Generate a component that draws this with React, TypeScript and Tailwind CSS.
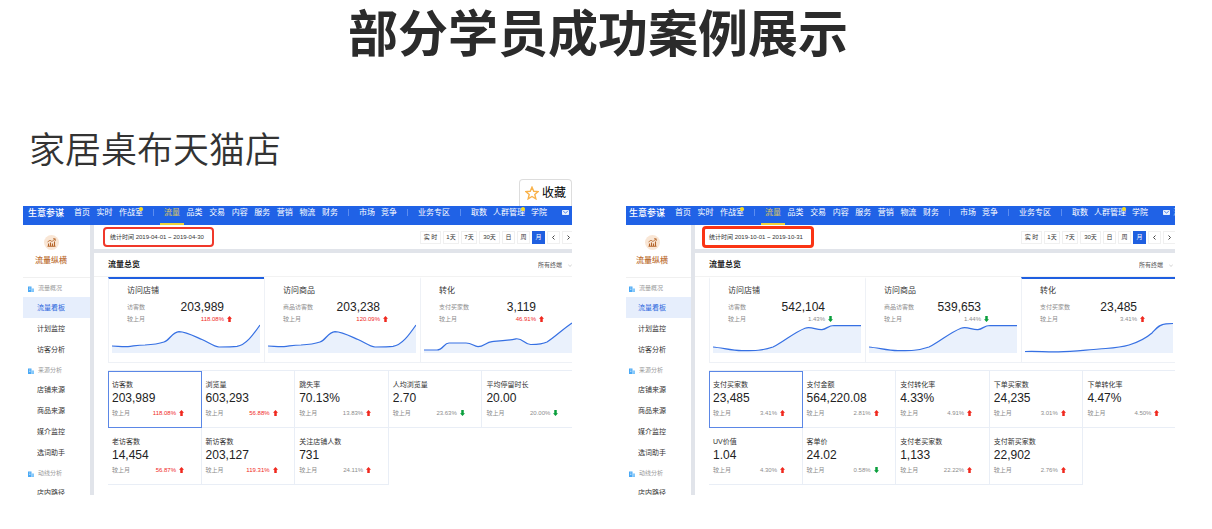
import { useState } from "react";

type Trend = "up" | "down";

interface Metric {
  label: string;
  value: string;
  change: string;
  trend: Trend;
  highlight?: boolean;
}

interface OverviewCard extends Metric {
  title: string;
  line: string;
}

interface Report {
  id: string;
  range: string;
  boldRange: boolean;
  activeCard: number;
  cards: OverviewCard[];
  metrics: Metric[];
}

const VISITOR_LINE = "M0 25C5 25 10 26 16 25.600C22 25 26 24 33 24C40 23.600 46 23 52 21C58 19 60 11 67 10.600C74 10.600 84 16 90 18.500C96 21 102 25.800 107 26C113 26 120 26 125 25.400C134 24 141 14 148 4";
const PAY_LINE = "M0 29L13 29C19 29 20 22 25 22L42 22C48 22 50 25.600 54 25.600C60 25.600 62 21 68 20.600C76 20 84 19.500 92 17.800C99 17 101 24 107 23.500C113 23.500 118 23.500 123 21C131 16 139 8 148 2";
const AUTUMN_LINE = "M0 26C10 27 19 29.700 29 29.700C40 29.700 48 30 60 26C72 20 80 12 92 7.200C98 5 103 9 109 8.600C114 8 115 4.600 121 4.500L148 4.700";
const AUTUMN_PAY_LINE = "M0 30.500C12 30 20 31 32 30.800C46 31 60 29 74 28C86 27 94 27 104 24C114 21 120 18 127 12C131 8 134 3 141 2.800L148 2.500";

const REPORTS: Report[] = [
  {
    id: "april",
    range: "2019-04-01 ~ 2019-04-30",
    boldRange: false,
    activeCard: 0,
    cards: [
      { title: "访问店铺", label: "访客数", value: "203,989", change: "118.08%", trend: "up", highlight: true, line: VISITOR_LINE },
      { title: "访问商品", label: "商品访客数", value: "203,238", change: "120.09%", trend: "up", highlight: true, line: VISITOR_LINE },
      { title: "转化", label: "支付买家数", value: "3,119", change: "46.91%", trend: "up", highlight: true, line: PAY_LINE },
    ],
    metrics: [
      { label: "访客数", value: "203,989", change: "118.08%", trend: "up", highlight: true },
      { label: "浏览量", value: "603,293", change: "56.88%", trend: "up", highlight: true },
      { label: "跳失率", value: "70.13%", change: "13.83%", trend: "up" },
      { label: "人均浏览量", value: "2.70", change: "23.63%", trend: "down" },
      { label: "平均停留时长", value: "20.00", change: "20.00%", trend: "down" },
      { label: "老访客数", value: "14,454", change: "56.87%", trend: "up", highlight: true },
      { label: "新访客数", value: "203,127", change: "119.31%", trend: "up", highlight: true },
      { label: "关注店铺人数", value: "731", change: "24.11%", trend: "up" },
    ],
  },
  {
    id: "october",
    range: "2019-10-01 ~ 2019-10-31",
    boldRange: true,
    activeCard: 2,
    cards: [
      { title: "访问店铺", label: "访客数", value: "542,104", change: "1.43%", trend: "down", line: AUTUMN_LINE },
      { title: "访问商品", label: "商品访客数", value: "539,653", change: "1.44%", trend: "down", line: AUTUMN_LINE },
      { title: "转化", label: "支付买家数", value: "23,485", change: "3.41%", trend: "up", line: AUTUMN_PAY_LINE },
    ],
    metrics: [
      { label: "支付买家数", value: "23,485", change: "3.41%", trend: "up" },
      { label: "支付金额", value: "564,220.08", change: "2.81%", trend: "up" },
      { label: "支付转化率", value: "4.33%", change: "4.91%", trend: "up" },
      { label: "下单买家数", value: "24,235", change: "3.01%", trend: "up" },
      { label: "下单转化率", value: "4.47%", change: "4.50%", trend: "up" },
      { label: "UV价值", value: "1.04", change: "4.30%", trend: "up" },
      { label: "客单价", value: "24.02", change: "0.58%", trend: "down" },
      { label: "支付老买家数", value: "1,133", change: "22.22%", trend: "up" },
      { label: "支付新买家数", value: "22,902", change: "2.76%", trend: "up" },
    ],
  },
];

const NAV_GROUPS = [
  { width: "w-[69px]", items: ["首页", "实时", "作战室"] },
  { width: "w-[174px]", items: ["流量", "品类", "交易", "内容", "服务", "营销", "物流", "财务"] },
  { width: "w-[38px]", items: ["市场", "竞争"] },
  { width: "w-[32px]", items: ["业务专区"] },
  { width: "w-[76px]", items: ["取数", "人群管理", "学院"] },
];

const NEW_ITEMS = ["作战室", "人群管理"];

const SIDE_SECTIONS = [
  { title: "流量概况", items: ["流量看板", "计划监控", "访客分析"] },
  { title: "来源分析", items: ["店铺来源", "商品来源", "媒介监控", "选词助手"] },
  { title: "动线分析", items: ["店内路径"] },
];

const PERIODS = [
  { label: "实 时", width: "w-[21px]" },
  { label: "1天", width: "w-[16px]" },
  { label: "7天", width: "w-[16px]" },
  { label: "30天", width: "w-[21px]" },
  { label: "日", width: "w-[13px]" },
  { label: "周", width: "w-[13px]" },
  { label: "月", width: "w-[13px]" },
];

const TrendArrow = ({ trend }: { trend: Trend }) => (
  <svg
    viewBox="0 0 10 12"
    className={trend === "up" ? "w-[5px] h-[6px] shrink-0 fill-[#f0281e]" : "w-[5px] h-[6px] shrink-0 rotate-180 fill-[#0a9f3c]"}
    aria-hidden="true"
  >
    <path d="M5 0L10 5.500H7.500V12H2.500V5.500H0Z" />
  </svg>
);

const ChangeRow = ({ metric }: { metric: Metric }) => (
  <div className="flex items-center h-[10px] text-[6px] leading-[10px]">
    <span className="text-[#8c8c8c]">较上月</span>
    <span className={metric.highlight ? "ml-auto text-[#f0281e]" : "ml-auto text-[#8c8c8c]"}>{metric.change}</span>
  </div>
);

const TopNav = () => (
  <nav className="flex h-[19px] bg-[#2062e6] pl-[5px] pt-px text-[8px] leading-[12px] text-white whitespace-nowrap">
    <a href="#home" className="w-[46px] shrink-0 text-[9px] font-medium">生意参谋</a>
    <div className="flex gap-[10px]">
      {NAV_GROUPS.map((group, i) => (
        <div key={group.items[0]} className="flex gap-[10px]">
          {i > 0 && <span className="w-px h-[7px] mt-[2px] bg-[#5c8df0]" />}
          <div className={`flex justify-between ${group.width}`}>
            {group.items.map((item) => (
              <a
                key={item}
                href={`#${item}`}
                className={item === "流量" ? "relative text-[#d9c465]" : "relative"}
              >
                {item}
                {item === "流量" && <span className="absolute -left-1 -right-1 top-[16px] h-[2px] bg-[#f0d33c]" />}
                {NEW_ITEMS.includes(item) && (
                  <span className="absolute right-0 top-0 size-1 rounded-full bg-[#f5dc1e]" />
                )}
              </a>
            ))}
          </div>
        </div>
      ))}
    </div>
    <a href="#messages" className="flex gap-[3px] ml-[15px] text-[#a9c4f8]">
      <svg viewBox="0 0 14 10" className="w-[7px] h-[5px] mt-[3px]" aria-hidden="true">
        <rect width="14" height="10" rx="1.500" fill="#e6effd" />
        <path d="M2.500 2.500L7 6L11.500 2.500" fill="none" stroke="#2062e6" strokeWidth="1.500" />
      </svg>
      消息
    </a>
  </nav>
);

const SideBar = () => (
  <aside className="w-[67px] shrink-0 bg-white whitespace-nowrap">
    <div className="flex flex-col items-center h-[53px] pt-[10px] pr-[11px] border-b border-[#f0f0f0]">
      <svg viewBox="0 0 30 30" className="size-[15px]" fill="none" aria-hidden="true">
        <circle cx="15" cy="15" r="15" fill="#f9e6d5" />
        <path d="M7 22.500H23M9 22V17M13 22V15M17 22V17M21 22V13" stroke="#b4642a" strokeWidth="2.200" />
        <path d="M7 14L12 10.500L16 13L22 8M18 7.500H22.500V12" stroke="#b4642a" strokeWidth="1.600" />
      </svg>
      <span className="mt-[5px] text-[8px] leading-[12px] font-medium text-[#bd7136]">流量纵横</span>
    </div>
    {SIDE_SECTIONS.map((section) => (
      <div key={section.title}>
        <div className="flex items-center h-[19px] gap-1 pl-[5px] pt-[2px] text-[6px] text-[#999999]">
          <svg viewBox="0 0 12 12" className="size-[6px]" aria-hidden="true">
            <path d="M0 1H7V12H0Z" fill="#4aa9f5" />
            <path d="M7 5H12V12H7Z" fill="#7cc4fa" />
            <path d="M2 4H5M2 7H5M9 8H10.500" stroke="#ffffff" />
          </svg>
          {section.title}
        </div>
        {section.items.map((item) => (
          <a
            key={item}
            href={`#${item}`}
            className={
              item === "流量看板"
                ? "flex items-center h-[21px] pl-[14px] pt-[2px] text-[7px] bg-[#e6eefc] text-[#2b66dc]"
                : "flex items-center h-[21px] pl-[14px] pt-[2px] text-[7px] text-[#333333]"
            }
          >
            {item}
          </a>
        ))}
      </div>
    ))}
  </aside>
);

const Dashboard = ({ report }: { report: Report }) => {
  const [period, setPeriod] = useState("月");

  return (
    <div className={report.boldRange ? "min-w-[556px] -ml-[2px]" : "min-w-[556px]"}>
      <TopNav />
      <div className="flex bg-[#e1e4ea]">
        <SideBar />
        <main className="flex-1 min-w-0 ml-1">
          <div className={`flex items-center h-[24px] pr-1 bg-white text-[6px] text-[#333333] ${report.boldRange ? "pl-[7px]" : "pl-[9px]"}`}>
            <div
              className={
                report.boldRange
                  ? "flex items-center h-[22px] w-[112px] pl-1 rounded-sm border-[3px] border-[#fa3414] whitespace-nowrap"
                  : "flex items-center h-[20px] w-[111px] pl-[5px] rounded-sm border-2 border-[#f0382a] whitespace-nowrap"
              }
            >
              统计时间 {report.range}
            </div>
            <div className="flex gap-[2px] ml-auto">
              {PERIODS.map((p) => (
                <button
                  key={p.label}
                  onClick={() => setPeriod(p.label)}
                  className={`h-[13px] border leading-[11px] whitespace-nowrap ${p.width} ${
                    period === p.label ? "bg-[#1f5fe0] border-[#1f5fe0] text-white" : "border-[#f0f0f0]"
                  }`}
                >
                  {p.label}
                </button>
              ))}
              <button aria-label="上一月" className="flex items-center justify-center size-[13px] border border-[#f0f0f0]">
                <svg viewBox="0 0 6 10" className="w-[3px] h-[5px]" fill="none" stroke="#333333" strokeWidth="1.800">
                  <path d="M5 1L1 5L5 9" />
                </svg>
              </button>
              <button aria-label="下一月" className="flex items-center justify-center size-[13px] border border-[#f0f0f0]">
                <svg viewBox="0 0 6 10" className="w-[3px] h-[5px]" fill="none" stroke="#333333" strokeWidth="1.800">
                  <path d="M1 1L5 5L1 9" />
                </svg>
              </button>
            </div>
          </div>

          <section className="mt-1 h-[242px] bg-white">
            <div className="flex items-center justify-between h-[24px] pl-[14px] pr-[3px] pt-px border-b border-[#f2f2f2]">
              <h3 className="text-[8px] font-bold text-[#222222]">流量总览</h3>
              <div className="relative flex items-center w-[38px]">
                <select aria-label="终端" className="appearance-none w-full h-[12px] text-[6px] leading-[12px] text-[#555555]">
                  <option>所有终端</option>
                </select>
                <svg viewBox="0 0 8 6" className="absolute right-1 w-1 h-[3px]" fill="none" stroke="#aaaaaa" aria-hidden="true">
                  <path d="M0.500 1L4 5L7.500 1" />
                </svg>
              </div>
            </div>

            <div className="pl-[14px] pr-[3px]">
              <div className="grid grid-cols-3 border-b border-[#eef1f6]">
                {report.cards.map((card, i) => (
                  <article
                    key={card.title}
                    className={`h-[85px] border-t-2 border-l border-l-[#eef1f6] ${
                      i === report.activeCard ? "border-t-[#1f5fe0]" : "border-t-transparent"
                    }`}
                  >
                    <div className="w-[115px] pl-[18px] pt-[6px]">
                      <h4 className="text-[8px] leading-[12px] text-[#333333]">{card.title}</h4>
                      <div className="flex items-center justify-between h-[14px] mt-[3px] whitespace-nowrap">
                        <span className="text-[6px] text-[#8c8c8c]">{card.label}</span>
                        <span className="text-[12px] leading-[14px] text-[#222222]">{card.value}</span>
                      </div>
                      <div className="relative">
                        <ChangeRow metric={card} />
                        <span className="absolute left-full ml-[3px] top-[2px] flex"><TrendArrow trend={card.trend} /></span>
                      </div>
                    </div>
                    <svg viewBox="0 0 148 32" preserveAspectRatio="none" className="block w-[148px] h-[32px] ml-[3px] -mt-[3px]" aria-hidden="true">
                      <path d={`${card.line}V32H0Z`} fill="#eaf1fc" />
                      <path d={card.line} fill="none" stroke="#3670e3" strokeWidth="1.200" />
                    </svg>
                  </article>
                ))}
              </div>

              <div className="grid grid-cols-5 mt-[7px] border-t border-[#e9eef6]">
                {report.metrics.map((metric, i) => (
                  <div
                    key={metric.label}
                    className={`h-[57px] pl-1 pt-[8px] border-r border-b border-[#e9eef6] ${
                      i === 0 ? "outline outline-1 -outline-offset-1 outline-[#5b87e6]" : ""
                    }`}
                  >
                    <div className="text-[7px] leading-[12px] text-[#333333]">{metric.label}</div>
                    <div className="text-[12px] leading-[14px] text-[#222222]">{metric.value}</div>
                    <div className="flex items-center gap-[3px] mt-[3px]">
                      <div className="w-[64px]"><ChangeRow metric={metric} /></div>
                      <TrendArrow trend={metric.trend} />
                    </div>
                  </div>
                ))}
              </div>
            </div>
          </section>
        </main>
      </div>
    </div>
  );
};

const App = () => {
  const [saved, setSaved] = useState(false);

  return (
    <div className="bg-white pb-[34px] font-['Liberation_Sans','Noto_Sans_CJK_SC',sans-serif]">
      <h1 className="pt-[10px] pr-[16px] text-center text-[50px] leading-[50px] font-bold text-[#2b2b2b]">部分学员成功案例展示</h1>
      <h2 className="mt-[71px] pl-[29px] text-[36px] leading-[40px] font-[350] text-[#333333]">家居桌布天猫店</h2>

      <div className="grid grid-cols-2 gap-[54px] mt-[35px] pl-[23px] pr-[37px]">
        {REPORTS.map((report, i) => (
          <div key={report.id} className="relative min-w-0">
            <div className="h-[289px] overflow-hidden">
              <Dashboard report={report} />
            </div>
            {i === 0 && (
              <button
                onClick={() => setSaved(!saved)}
                aria-pressed={saved}
                className="absolute right-0 bottom-full flex items-center gap-[3px] h-[27px] w-[53px] pl-[5px] rounded-t-sm border border-b-0 border-[#dddddd] bg-white text-[12px] text-black whitespace-nowrap"
              >
                <svg viewBox="0 0 24 24" className="size-[14px] shrink-0" fill={saved ? "#f9b24a" : "none"} stroke="#f9b24a" strokeWidth="2.400" aria-hidden="true">
                  <path d="M12 2L15 9L22.500 9.600L16.800 14.500L18.600 22L12 18L5.400 22L7.200 14.500L1.500 9.600L9 9Z" />
                </svg>
                收藏
              </button>
            )}
          </div>
        ))}
      </div>
    </div>
  );
};

export default App;
